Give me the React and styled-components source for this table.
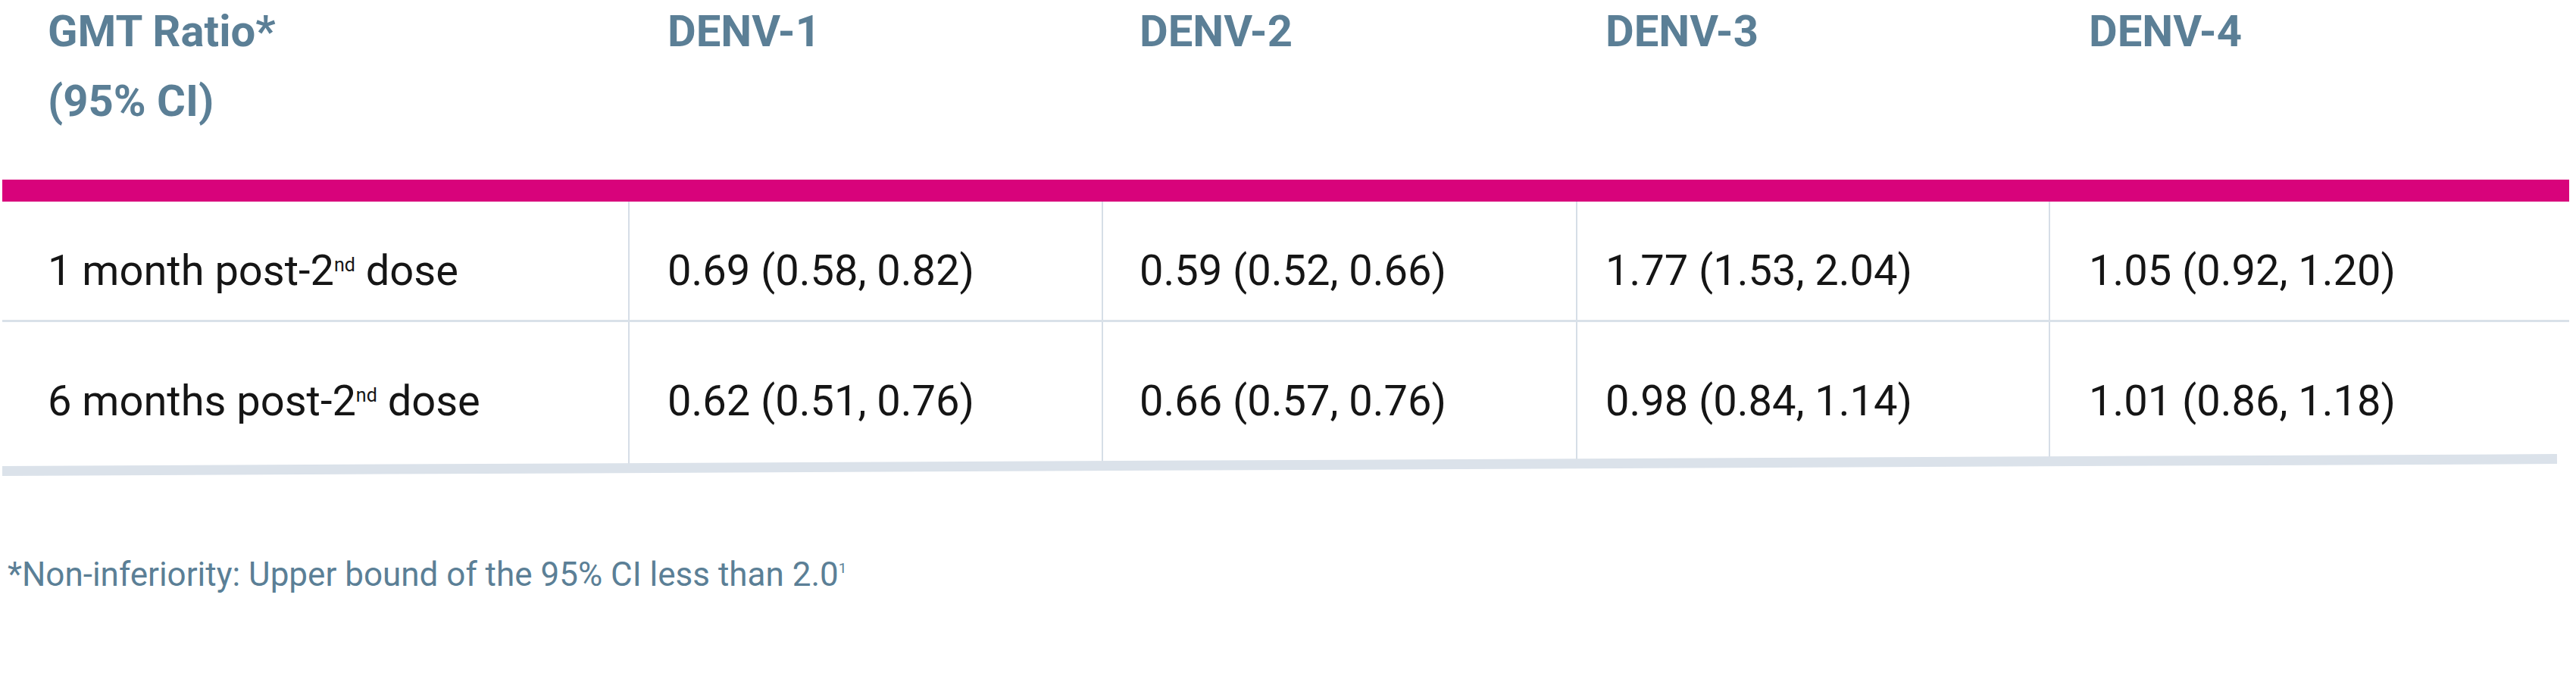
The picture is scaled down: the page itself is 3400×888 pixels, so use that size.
import React from "react";
import styled, { createGlobalStyle } from "styled-components";

const GlobalStyle = createGlobalStyle`
  body {
    margin: 0;
    background: #ffffff;
    font-family: Roboto, "Liberation Sans", sans-serif;
  }
`;

const COLS = "826px 625px 626px 624px 687px";

const columns = [
  { key: "label", title: ["GMT Ratio*", "(95% CI)"], pad: 60 },
  { key: "d1", title: ["DENV-1"], pad: 52 },
  { key: "d2", title: ["DENV-2"], pad: 50 },
  { key: "d3", title: ["DENV-3"], pad: 39 },
  { key: "d4", title: ["DENV-4"], pad: 53 },
];

const rows = [
  {
    months: "1 month",
    top: 58,
    height: 156,
    values: ["0.69 (0.58, 0.82)", "0.59 (0.52, 0.66)", "1.77 (1.53, 2.04)", "1.05 (0.92, 1.20)"],
  },
  {
    months: "6 months",
    top: 71,
    height: 190,
    values: ["0.62 (0.51, 0.76)", "0.66 (0.57, 0.76)", "0.98 (0.84, 1.14)", "1.01 (0.86, 1.18)"],
  },
];

const Page = styled.div`
  width: 3400px;
  padding-left: 3px;
  box-sizing: border-box;
`;

const Table = styled.div`
  width: 3388px;
`;

const HeadRow = styled.div`
  display: grid;
  grid-template-columns: ${COLS};
  height: 237px;
`;

const HeadCell = styled.div`
  padding-left: ${(p) => p.$pad}px;
  font-weight: 700;
  font-size: 58px;
  line-height: 92px;
  margin-top: -5px;
  color: #5b7f96;
`;

const PinkBar = styled.div`
  height: 29px;
  background: #d8037b;
`;

const BodyRow = styled.div`
  display: grid;
  grid-template-columns: ${COLS};
  height: ${(p) => p.$height}px;
`;

const Cell = styled.div`
  box-sizing: border-box;
  padding-left: ${(p) => p.$pad}px;
  padding-top: ${(p) => p.$top}px;
  border-left: ${(p) => (p.$first ? "none" : "2px solid #d6dee7")};
  font-size: 56px;
  color: #151515;
  white-space: nowrap;
`;

const Sup = styled.span`
  font-size: 25px;
  vertical-align: 18px;
`;

const Divider = styled.div`
  height: 3px;
  background: #d9e1e9;
`;

const BottomBar = styled.div`
  width: 3372px;
  height: 13px;
  background: #dbe2ea;
  transform: rotate(-0.27deg);
  transform-origin: left center;
`;

const Footnote = styled.p`
  margin: 104px 0 0 7px;
  font-size: 44px;
  color: #5b7f96;
`;

const FootSup = styled.span`
  font-size: 19px;
  vertical-align: 17px;
`;

const App = () => {
  return (
    <Page>
      <GlobalStyle />
      <Table>
        <HeadRow>
          {columns.map((c) => (
            <HeadCell key={c.key} $pad={c.pad}>
              {c.title.map((t) => (
                <div key={t}>{t}</div>
              ))}
            </HeadCell>
          ))}
        </HeadRow>
        <PinkBar />
        {rows.map((r, i) => (
          <React.Fragment key={r.months}>
            {i > 0 && <Divider />}
            <BodyRow $height={r.height}>
              <Cell $first $pad={columns[0].pad} $top={r.top}>
                {r.months} post-2<Sup>nd</Sup> dose
              </Cell>
              {r.values.map((v, j) => (
                <Cell key={j} $pad={columns[j + 1].pad - 2} $top={r.top}>
                  {v}
                </Cell>
              ))}
            </BodyRow>
          </React.Fragment>
        ))}
        <BottomBar />
      </Table>
      <Footnote>
        *Non-inferiority: Upper bound of the 95% CI less than 2.0<FootSup>1</FootSup>
      </Footnote>
    </Page>
  );
};

export default App;
